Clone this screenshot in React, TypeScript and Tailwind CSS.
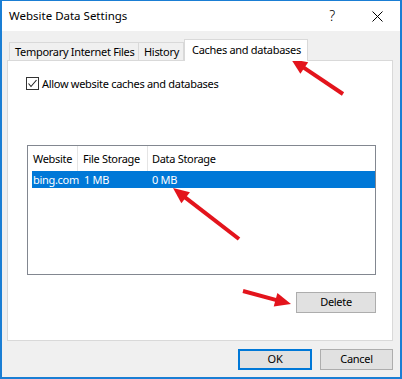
import React from "react";

const FONT = { fontFamily: '"Noto Sans", "Open Sans", sans-serif' };

type Pt = [number, number];

// red annotation arrow, tail -> tip
function Arrow({ from, to }: { from: Pt; to: Pt }) {
  const [x1, y1] = from;
  const [x2, y2] = to;
  const len = Math.hypot(x2 - x1, y2 - y1);
  const ux = (x2 - x1) / len;
  const uy = (y2 - y1) / len;
  const headLen = 16;
  const half = 7;
  const bx = x2 - ux * headLen;
  const by = y2 - uy * headLen;
  const pts = [
    `${x2},${y2}`,
    `${bx - uy * half},${by + ux * half}`,
    `${bx + uy * half},${by - ux * half}`,
  ].join(" ");
  return (
    <g>
      <line x1={x1} y1={y1} x2={bx + ux * 2} y2={by + uy * 2} stroke="#e3141c" strokeWidth={4} />
      <polygon points={pts} fill="#e3141c" />
    </g>
  );
}

function WinButton({ label, primary = false, className = "" }: { label: string; primary?: boolean; className?: string }) {
  return (
    <button
      type="button"
      className={`h-[21px] bg-[#e1e1e1] text-[11px] text-black flex items-center justify-center ${
        primary ? "border-2 border-[#0078d7]" : "border border-[#adadad]"
      } ${className}`}
    >
      {label}
    </button>
  );
}

export default function App() {
  return (
    <div
      className="relative w-[402px] h-[379px] flex flex-col border-t border-x-2 border-b-2 border-[#1a7ed4] bg-[#f0f0f0] text-black tracking-[-0.3px] overflow-hidden"
      style={FONT}
    >
      {/* title bar */}
      <div className="h-[30px] bg-white flex items-center pl-[7px] shrink-0">
        <span className="text-[11.5px] leading-none tracking-normal">Website Data Settings</span>
        <span className="ml-auto mr-[37px] text-[14px] font-light leading-none">?</span>
        <svg width="11" height="11" viewBox="0 0 11 11" className="mr-[17px]">
          <path d="M0.5 0.5 L10.5 10.5 M10.5 0.5 L0.5 10.5" stroke="#000" strokeWidth="1" />
        </svg>
      </div>

      <div className="flex-1 flex flex-col pl-[5px] pr-[7px]">
        {/* tabs */}
        <div className="mt-[8px] h-[21px] flex items-end pl-[2px] relative z-10 text-[11px] whitespace-nowrap">
          <div className="h-[18px] w-[130px] border border-b-0 border-[#d9d9d9] bg-[#f0f0f0] leading-none flex items-center pl-[5px]">
            Temporary Internet Files
          </div>
          <div className="h-[18px] w-[45px] border border-b-0 border-l-0 border-[#d9d9d9] bg-[#f0f0f0] leading-none flex items-center pl-[5px]">
            History
          </div>
          <div className="h-[22px] w-[124px] -mb-px border border-b-0 border-[#d9d9d9] bg-white leading-none flex items-center pl-[7px] pb-[3px]">
            Caches and databases
          </div>
        </div>

        {/* tab panel */}
        <div className="h-[281px] w-full border border-[#d9d9d9] bg-white flex flex-col pl-[18px] pt-[16px] text-[11px]">
          <label className="flex items-center gap-[3px] leading-none">
            <span className="w-[13px] h-[13px] border border-[#333] bg-white flex items-center justify-center">
              <svg width="11" height="11" viewBox="0 0 11 11">
                <path d="M1.5 5.5 L4 8.5 L9.5 2" fill="none" stroke="#222" strokeWidth="1.1" />
              </svg>
            </span>
            Allow website caches and databases
          </label>

          {/* list view */}
          <div className="mt-[55px] ml-px w-[349px] h-[130px] border border-[#828790] bg-white flex flex-col pl-[4px] whitespace-nowrap">
            <div className="h-[25px] flex leading-none">
              <div className="w-[46px] flex items-center pl-[1px] border-r border-[#e5e5e5]">Website</div>
              <div className="w-[70px] flex items-center pl-[5px] border-r border-[#e5e5e5]">File Storage</div>
              <div className="flex items-center pl-[4px]">Data Storage</div>
            </div>
            <div className="h-[17px] bg-[#0078d7] text-white flex leading-none">
              <div className="w-[46px] flex items-center pl-[1px]">bing.com</div>
              <div className="w-[70px] flex items-center pl-[6px]">1 MB</div>
              <div className="flex items-center pl-[4px]">0 MB</div>
            </div>
          </div>

          <div className="mt-[17px] ml-px w-[349px] flex justify-end">
            <WinButton label="Delete" className="w-[80px]" />
          </div>
        </div>

        {/* dialog buttons */}
        <div className="mt-[8px] flex justify-end gap-[8px]">
          <WinButton label="OK" primary className="w-[74px]" />
          <WinButton label="Cancel" className="w-[73px]" />
        </div>
      </div>

      {/* annotations */}
      <svg className="absolute left-0 top-0 pointer-events-none" width="402" height="379" style={{ marginLeft: -2, marginTop: -1 }}>
        <Arrow from={[343, 94]} to={[291, 59]} />
        <Arrow from={[239, 239]} to={[173, 188]} />
        <Arrow from={[243, 291]} to={[291, 304]} />
      </svg>
    </div>
  );
}
